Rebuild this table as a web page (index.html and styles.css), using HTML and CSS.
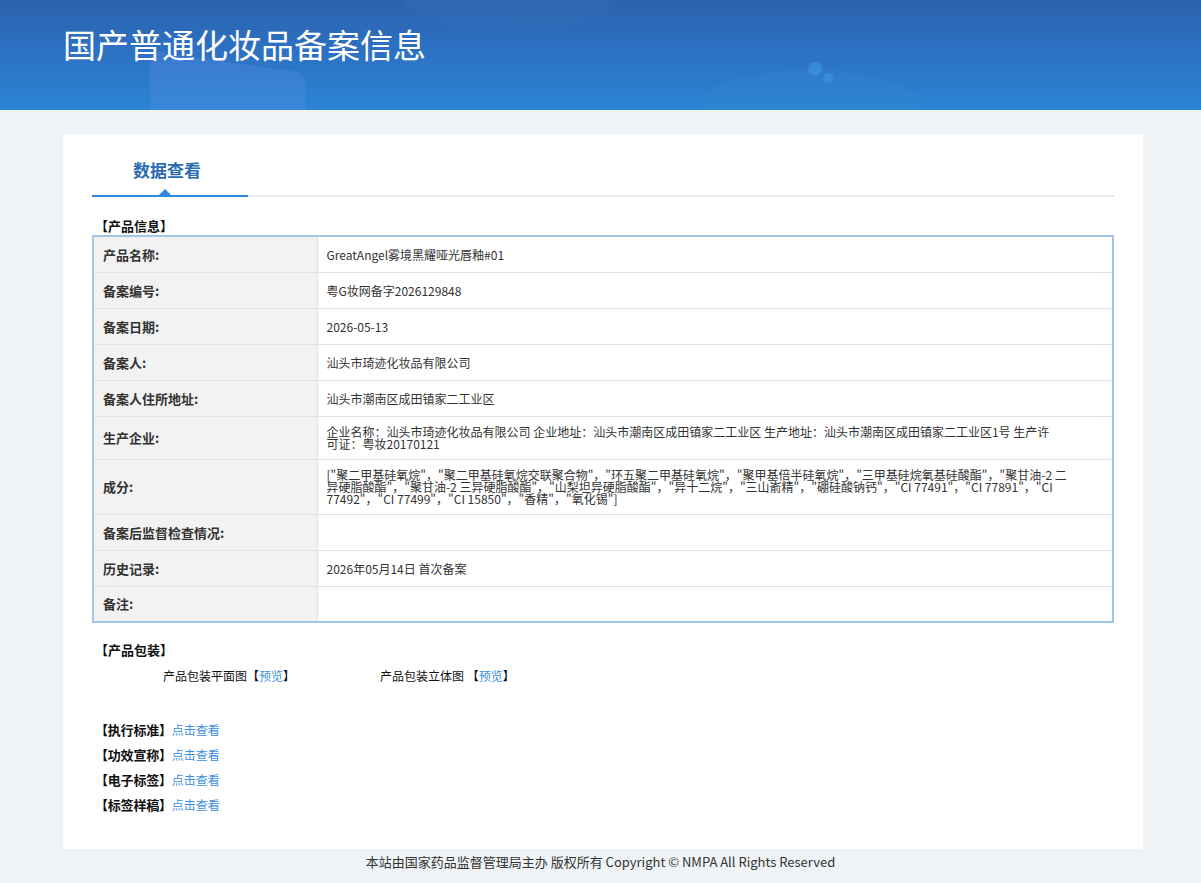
FILE: index.html
```html
<!DOCTYPE html>
<html lang="zh-CN">
<head>
<meta charset="utf-8">
<title>国产普通化妆品备案信息</title>
<link rel="stylesheet" href="styles.css">
</head>
<body>
<header class="banner">
  <div class="blob blob1"></div>
  <div class="blob blob2"></div>
  <div class="blob blob3"></div>
  <div class="dot dot1"></div>
  <div class="dot dot2"></div>
  <h1 class="title">国产普通化妆品备案信息</h1>
</header>
<main class="card">
  <div class="tabs">
    <div class="tab active">数据查看</div>
  </div>
  <div class="section-title">【产品信息】</div>
  <table class="info">
    <tr><th>产品名称:</th><td>GreatAngel雾境黑耀哑光唇釉#01</td></tr>
    <tr><th>备案编号:</th><td>粤G妆网备字2026129848</td></tr>
    <tr><th>备案日期:</th><td>2026-05-13</td></tr>
    <tr><th>备案人:</th><td>汕头市琦迹化妆品有限公司</td></tr>
    <tr><th>备案人住所地址:</th><td>汕头市潮南区成田镇家二工业区</td></tr>
    <tr class="multi"><th>生产企业:</th><td><div class="wrap">企业名称：汕头市琦迹化妆品有限公司 企业地址：汕头市潮南区成田镇家二工业区 生产地址：汕头市潮南区成田镇家二工业区1号 生产许<br>可证：粤妆20170121</div></td></tr>
    <tr class="multi"><th>成分:</th><td><div class="wrap">["聚二甲基硅氧烷"，"聚二甲基硅氧烷交联聚合物"，"环五聚二甲基硅氧烷"，"聚甲基倍半硅氧烷"，"三甲基硅烷氧基硅酸酯"，"聚甘油-2 二<br>异硬脂酸酯"，"聚甘油-2 三异硬脂酸酯"，"山梨坦异硬脂酸酯"，"异十二烷"，"三山嵛精"，"硼硅酸钠钙"，"CI 77491"，"CI 77891"，"CI<br>77492"，"CI 77499"，"CI 15850"，"香精"，"氧化锡"]</div></td></tr>
    <tr><th>备案后监督检查情况:</th><td></td></tr>
    <tr><th>历史记录:</th><td>2026年05月14日 首次备案</td></tr>
    <tr><th>备注:</th><td></td></tr>
  </table>
  <div class="section-title pkg-title">【产品包装】</div>
  <div class="pkg">
    <span class="pkg-item">产品包装平面图【<a class="link" href="#">预览</a>】</span>
    <span class="pkg-item">产品包装立体图 【<a class="link" href="#">预览</a>】</span>
  </div>
  <ul class="links">
    <li><b>【执行标准】</b><a class="link" href="#">点击查看</a></li>
    <li><b>【功效宣称】</b><a class="link" href="#">点击查看</a></li>
    <li><b>【电子标签】</b><a class="link" href="#">点击查看</a></li>
    <li><b>【标签样稿】</b><a class="link" href="#">点击查看</a></li>
  </ul>
</main>
<footer class="footer">本站由国家药品监督管理局主办 版权所有 Copyright © NMPA All Rights Reserved</footer>
</body>
</html>
```
FILE: styles.css
```css
* { box-sizing: border-box; }
html, body { margin: 0; padding: 0; }
body {
  background: #eff3f6;
  font-family: "Noto Sans CJK SC", "Noto Sans", sans-serif;
  color: #333;
  font-size: 12px;
}
.banner {
  position: relative;
  height: 110px;
  overflow: hidden;
  background: linear-gradient(180deg, #2c62ae 0%, #2d72c4 50%, #2a84d2 100%);
}
.blob {
  position: absolute;
  border-radius: 50%;
}
.blob1 { left: 150px; top: 62px; width: 156px; height: 90px; background: rgba(110, 150, 240, 0.22); border-radius: 10px; transform: skewY(8deg); }
.blob2 { left: 700px; top: 70px; width: 220px; height: 70px; background: rgba(90, 160, 235, 0.08); }
.blob3 { left: 400px; top: -40px; width: 220px; height: 70px; background: rgba(120, 170, 240, 0.05); }
.dot { position: absolute; border-radius: 50%; background: rgba(60, 145, 225, 0.7); }
.dot1 { left: 808px; top: 62px; width: 14px; height: 14px; }
.dot2 { left: 823px; top: 73px; width: 10px; height: 10px; }
.title {
  position: relative;
  margin: 0;
  padding: 22px 0 0 63px;
  color: #fff;
  font-size: 33px;
  font-weight: 400;
  line-height: 44px;
}
.card {
  width: 1080px;
  margin: 24px 0 0 63px;
  background: #fff;
  padding: 22px 29px 30px 29px;
  min-height: 715px;
}
.tabs {
  display: flex;
  border-bottom: 2px solid #e8e8e8;
  height: 41px;
}
.tab {
  position: relative;
  width: 156px;
  text-align: center;
  font-size: 17px;
  font-weight: 700;
  color: #2a6cb0;
  line-height: 28px;
  padding-right: 6px;
}
.tab.active { border-bottom: 2px solid #2e8ae0; margin-bottom: -2px; }
.tab.active::after {
  content: "";
  position: absolute;
  left: 67px;
  bottom: 0;
  border-left: 6px solid transparent;
  border-right: 6px solid transparent;
  border-bottom: 6px solid #2e8ae0;
}
.section-title {
  font-size: 13px;
  font-weight: 700;
  color: #111;
  margin: 20px 0 0 3px;
  line-height: 18px;
}
.info {
  width: 100%;
  border-collapse: collapse;
  border: 2px solid #a6c3ee;
}
.info th, .info td {
  border-bottom: 1px solid #e2e2e2;
  height: 36px;
  font-size: 12px;
  vertical-align: middle;
}
.info th {
  width: 224px;
  background: #f2f2f2;
  text-align: left;
  font-weight: 700;
  font-size: 13px;
  color: #333;
  padding: 0 0 0 9px;
  border-right: 1px solid #e2e2e2;
}
.info td {
  padding: 0 10px 0 9px;
  color: #333;
  white-space: nowrap;
}
.info tr.multi td { padding-top: 9px; padding-bottom: 9px; }
.wrap { line-height: 12px; }
.pkg-title { margin-top: 18px; }
.pkg {
  display: flex;
  padding: 7px 0 0 71px;
  font-size: 12px;
  color: #111;
  line-height: 20px;
}
.pkg-item { width: 217px; }
.link { color: #3d8fdf; text-decoration: none; }
.links {
  list-style: none;
  margin: 31px 0 0 3px;
  padding: 0;
}
.links li {
  height: 25px;
  line-height: 25px;
  font-size: 12px;
}
.links b { font-size: 13px; color: #111; margin-right: 0; letter-spacing: -0.2px; }
.footer {
  text-align: center;
  font-size: 13px;
  color: #333;
  line-height: 26px;
  padding-bottom: 8px;
}
```
